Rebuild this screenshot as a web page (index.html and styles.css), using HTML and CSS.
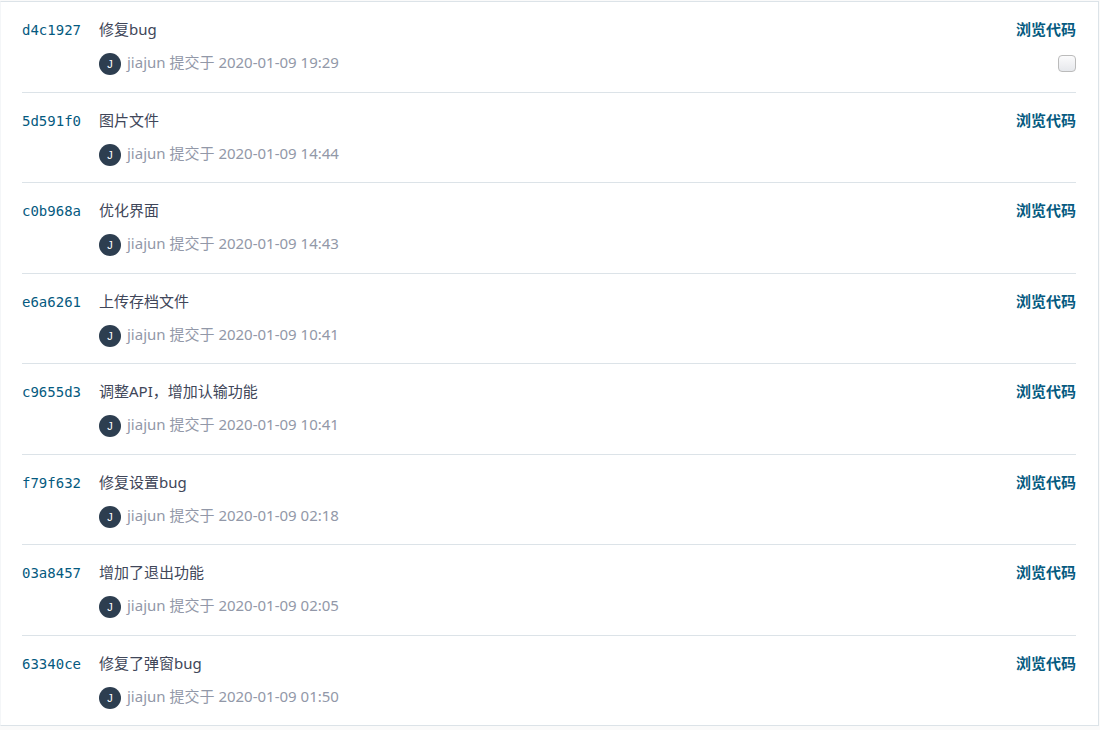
FILE: index.html
```html
<!DOCTYPE html>
<html lang="zh-CN">
<head>
    <meta charset="UTF-8">
    <meta name="viewport" content="width=device-width, initial-scale=1.0">
    <title>提交记录</title>
    <link rel="stylesheet" href="styles.css">
</head>
<body>
    <ul class="commits">
        <li class="commit">
            <a href="#" class="hash">d4c1927</a>
            <div class="info">
                <p class="message">修复bug</p>
                <p class="meta"><span class="avatar">J</span><span>jiajun 提交于 <time>2020-01-09 19:29</time></span></p>
            </div>
            <div class="actions">
                <a href="#" class="browse">浏览代码</a>
                <input type="checkbox" class="check" aria-label="选择 d4c1927">
            </div>
        </li>
        <li class="commit">
            <a href="#" class="hash">5d591f0</a>
            <div class="info">
                <p class="message">图片文件</p>
                <p class="meta"><span class="avatar">J</span><span>jiajun 提交于 <time>2020-01-09 14:44</time></span></p>
            </div>
            <div class="actions">
                <a href="#" class="browse">浏览代码</a>
            </div>
        </li>
        <li class="commit">
            <a href="#" class="hash">c0b968a</a>
            <div class="info">
                <p class="message">优化界面</p>
                <p class="meta"><span class="avatar">J</span><span>jiajun 提交于 <time>2020-01-09 14:43</time></span></p>
            </div>
            <div class="actions">
                <a href="#" class="browse">浏览代码</a>
            </div>
        </li>
        <li class="commit">
            <a href="#" class="hash">e6a6261</a>
            <div class="info">
                <p class="message">上传存档文件</p>
                <p class="meta"><span class="avatar">J</span><span>jiajun 提交于 <time>2020-01-09 10:41</time></span></p>
            </div>
            <div class="actions">
                <a href="#" class="browse">浏览代码</a>
            </div>
        </li>
        <li class="commit">
            <a href="#" class="hash">c9655d3</a>
            <div class="info">
                <p class="message">调整API，增加认输功能</p>
                <p class="meta"><span class="avatar">J</span><span>jiajun 提交于 <time>2020-01-09 10:41</time></span></p>
            </div>
            <div class="actions">
                <a href="#" class="browse">浏览代码</a>
            </div>
        </li>
        <li class="commit">
            <a href="#" class="hash">f79f632</a>
            <div class="info">
                <p class="message">修复设置bug</p>
                <p class="meta"><span class="avatar">J</span><span>jiajun 提交于 <time>2020-01-09 02:18</time></span></p>
            </div>
            <div class="actions">
                <a href="#" class="browse">浏览代码</a>
            </div>
        </li>
        <li class="commit">
            <a href="#" class="hash">03a8457</a>
            <div class="info">
                <p class="message">增加了退出功能</p>
                <p class="meta"><span class="avatar">J</span><span>jiajun 提交于 <time>2020-01-09 02:05</time></span></p>
            </div>
            <div class="actions">
                <a href="#" class="browse">浏览代码</a>
            </div>
        </li>
        <li class="commit">
            <a href="#" class="hash">63340ce</a>
            <div class="info">
                <p class="message">修复了弹窗bug</p>
                <p class="meta"><span class="avatar">J</span><span>jiajun 提交于 <time>2020-01-09 01:50</time></span></p>
            </div>
            <div class="actions">
                <a href="#" class="browse">浏览代码</a>
            </div>
        </li>
    </ul>
</body>
</html>
```
FILE: styles.css
```css
:root {
    --link: #055a80;
    --text: #404659;
    --muted: #9298a8;
    --line: #dce3e8;
    --avatar: #2d3e50;
}

* {
    margin: 0;
    padding: 0;
    box-sizing: border-box;
}

body {
    display: flex;
    flex-direction: column;
    min-height: 100vh;
    padding: 1px 1px 4px 0;
    background-color: #fafafa;
    color: var(--text);
    font-family: "Noto Sans", "Noto Sans CJK SC", sans-serif;
    font-size: 15px;
    line-height: 22px;
}

a {
    color: var(--link);
    text-decoration: none;
}

a:hover {
    text-decoration: underline;
}

.commits {
    flex: 1;
    display: flex;
    flex-direction: column;
    padding: 0 22px 0 21px;
    background-color: #fff;
    border: 1px solid var(--line);
    border-left-color: #f4f6f8;
    list-style: none;
}

/* rows share the height of the list */
.commit {
    flex: 1;
    display: flex;
    padding: 16px 0 15px;
    border-bottom: 1px solid var(--line);
}

.commit:last-child {
    border-bottom: none;
}

.hash {
    width: 77px;
    font-family: "DejaVu Sans Mono", monospace;
    font-size: 14px;
    line-height: 24px;
}

.info {
    flex: 1;
}

.meta {
    display: flex;
    gap: 6px;
    margin-top: 11px;
    color: var(--muted);
}

.avatar {
    width: 22px;
    height: 22px;
    margin-top: 2px;
    border-radius: 50%;
    background-color: var(--avatar);
    color: #fff;
    font-family: "Liberation Sans", sans-serif;
    font-size: 11px;
    text-align: center;
}

.actions {
    display: flex;
    flex-direction: column;
    align-items: flex-end;
    gap: 15px;
}

.browse {
    font-weight: 700;
}

.check {
    appearance: none;
    width: 18px;
    height: 17px;
    border: 1px solid #bbb;
    border-radius: 4px;
    background: linear-gradient(#fbfbfc, #e6e8ec);
    cursor: pointer;
}

.check:checked {
    background: var(--link);
}
```
